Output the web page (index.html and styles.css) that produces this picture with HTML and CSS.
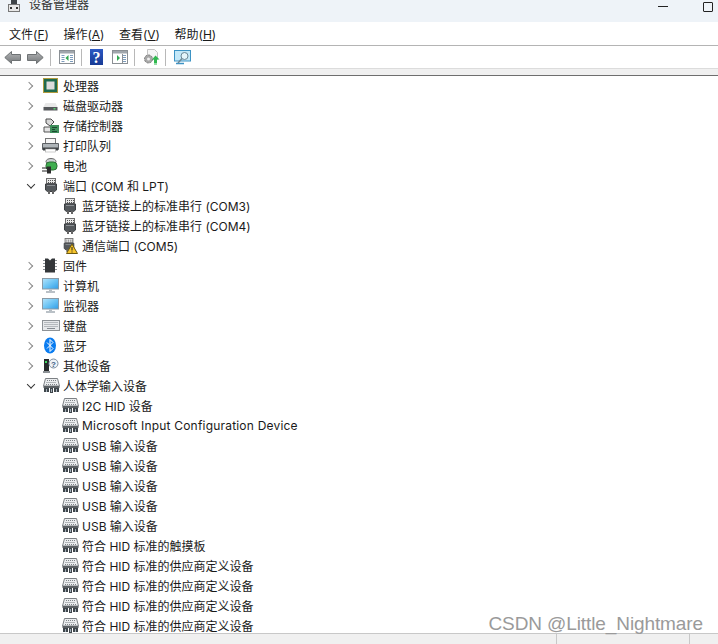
FILE: index.html
```html
<!DOCTYPE html>
<html lang="zh-CN">
<head>
    <meta charset="UTF-8">
    <title>设备管理器</title>
    <link rel="stylesheet" href="styles.css">
</head>
<body>
    <svg class="defs" width="0" height="0">
        <defs>
            <linearGradient id="arrow-grey" x1="0" y1="0" x2="0" y2="1">
                <stop offset="0" stop-color="#b4b6b8"/>
                <stop offset="1" stop-color="#747779"/>
            </linearGradient>
            <linearGradient id="help-blue" x1="0" y1="0" x2="0" y2="1">
                <stop offset="0" stop-color="#2b58c4"/>
                <stop offset="1" stop-color="#173a94"/>
            </linearGradient>
            <linearGradient id="screen-blue" x1="0" y1="0" x2="1" y2="1">
                <stop offset="0" stop-color="#b4e4fb"/>
                <stop offset="0.5" stop-color="#6cc4f4"/>
                <stop offset="1" stop-color="#2f9ce6"/>
            </linearGradient>
            <symbol id="port" viewBox="0 0 16 16">
                <rect x="3.5" y="0.5" width="9" height="5" fill="#e8e8e8" stroke="#6f6f6f"/>
                <path d="M5 2.500h1M7 2.500h1M9 2.500h1M11 2.500h1M5 4.500h1M7 4.500h1M9 4.500h1M11 4.500h1" stroke="#555"/>
                <path d="M2.5 6h11v6l-2 1.5h-7l-2-1.5z" fill="#54585c" stroke="#3c3f42"/>
                <path d="M4 7.500h8" stroke="#8c9094"/>
                <rect x="5" y="13" width="2" height="3" fill="#666"/>
                <rect x="9" y="13" width="2" height="3" fill="#666"/>
            </symbol>
            <symbol id="hid" viewBox="0 0 17 15">
                <path d="M2.5 0.500h12l2 7.500h-16z" fill="#eceef0" stroke="#7c8084"/>
                <path d="M4 2.500h9M3.500 4.500h10M3 6.500h11" stroke="#7d8286" stroke-dasharray="1 1"/>
                <rect x="0.5" y="8" width="16" height="2" fill="#5b6064"/>
                <path d="M1 10h5v4H1zM7 10h3v5H7zM11 10h5v4h-5z" fill="#3f464b"/>
                <path d="M3.500 11v3M8.500 11v3M13.500 11v3" stroke="#a4b0ba"/>
            </symbol>
            <symbol id="monitor" viewBox="0 0 17 15">
                <rect x="0.5" y="0.5" width="16" height="10.500" fill="url(#screen-blue)" stroke="#8a9aa6"/>
                <path d="M7 11.500h3v1.500H7z" fill="#b4bcc2"/>
                <path d="M4 14h9" stroke="#a3adb4" stroke-width="1.500"/>
            </symbol>
            <symbol id="pane" viewBox="0 0 16 14">
                <rect x="0.5" y="0.5" width="15" height="13" fill="#fff" stroke="#8a8f94"/>
                <rect x="1" y="1" width="14" height="2.500" fill="#a0a6ac"/>
            </symbol>
        </defs>
    </svg>

    <div class="window">
        <div class="titlebar">
            <svg class="title-icon" width="12" height="14" viewBox="0 0 12 14">
                <rect x="3" y="0" width="6" height="5" fill="#3e4347"/>
                <rect x="0.5" y="5.5" width="11" height="7" fill="#e8e8e8" stroke="#777"/>
                <path d="M2 9h2M8 9h2" stroke="#333" stroke-width="2"/>
            </svg>
            <span class="title-text">设备管理器</span>
            <span class="win-min"></span>
            <span class="win-max"></span>
        </div>

        <div class="menubar">
            <span>文件(<u>F</u>)</span>
            <span>操作(<u>A</u>)</span>
            <span>查看(<u>V</u>)</span>
            <span>帮助(<u>H</u>)</span>
        </div>

        <div class="toolbar">
            <svg class="tool" width="17" height="13" viewBox="0 0 17 13"><path d="M7.500 0.500L0.800 6.500l6.700 6V9.500h9v-6h-9z" fill="url(#arrow-grey)" stroke="#6e7274"/></svg>
            <svg class="tool" width="17" height="13" viewBox="0 0 17 13"><path d="M9.500 0.500l6.700 6-6.700 6V9.500h-9v-6h9z" fill="url(#arrow-grey)" stroke="#6e7274"/></svg>
            <i class="sep"></i>
            <svg class="tool" width="16" height="14" viewBox="0 0 16 14">
                <use href="#pane"/>
                <path d="M2.500 5.500h3M2.500 7.500h3M2.500 9.500h3M2.500 11.500h3M11 5.500h3M11 7.500h3M11 9.500h3M11 11.500h3" stroke="#7d9cbc"/>
                <path d="M9.500 5v6L6.500 8z" fill="#2fa84f"/>
            </svg>
            <i class="sep"></i>
            <svg class="tool tool-help" width="13" height="16" viewBox="0 0 13 16">
                <rect width="13" height="16" fill="url(#help-blue)"/>
                <text x="6.500" y="13.500" class="help-mark">?</text>
            </svg>
            <svg class="tool" width="16" height="14" viewBox="0 0 16 14">
                <use href="#pane"/>
                <path d="M10.500 4v9.500" stroke="#8a8f94"/>
                <path d="M11 5.500h3M11 7.500h3M11 9.500h3M11 11.500h3" stroke="#7d9cbc"/>
                <path d="M5 5v6l3-3z" fill="#2fa84f"/>
            </svg>
            <i class="sep"></i>
            <svg class="tool tool-gear" width="17" height="16" viewBox="0 0 17 16">
                <path d="M4.500 0.500h7l3 3v7h-10z" fill="#f6f6f6" stroke="#c4c4c4"/>
                <circle cx="5.500" cy="10" r="4" fill="#a8a8a8" stroke="#7c7c7c" stroke-dasharray="2 1"/>
                <circle cx="5.500" cy="10" r="1.500" fill="#eee"/>
                <path d="M12.500 6.500l4 4h-2.500V14h-3v-3.500H9z" fill="#2fb84f"/>
                <rect x="11" y="14.500" width="3" height="1" fill="#2fb84f"/>
            </svg>
            <i class="sep"></i>
            <svg class="tool" width="17" height="15" viewBox="0 0 17 15">
                <rect x="0.5" y="0.5" width="16" height="10.500" fill="#c4e8f8" stroke="#3d93c4"/>
                <path d="M2 13.500h8" stroke="#3d93c4" stroke-width="1.500"/>
                <circle cx="10.500" cy="6" r="3.500" fill="#e4f5fb" stroke="#6c8796"/>
                <path d="M8 8.500L4 13" stroke="#6c8796" stroke-width="1.500"/>
            </svg>
        </div>

        <div class="band"></div>

        <div class="tree">
            <div class="row">
                <i class="chev"></i>
                <svg class="ico" width="15" height="15" viewBox="0 0 15 15">
                    <rect x="0" y="0" width="15" height="15" fill="#b09a3c"/>
                    <rect x="1" y="1" width="13" height="13" fill="#1f6a4e"/>
                    <rect x="3.500" y="3.500" width="8" height="8" fill="#dcdcdc"/>
                </svg>
                <span>处理器</span>
            </div>
            <div class="row">
                <i class="chev"></i>
                <svg class="ico" width="15" height="16" viewBox="0 0 15 16">
                    <path d="M2.500 5h10l2 4h-14z" fill="#e8e8e8"/>
                    <rect x="0.5" y="9" width="14" height="3.500" fill="#56595c"/>
                    <rect x="10.500" y="10" width="2" height="1.500" fill="#5cd070"/>
                </svg>
                <span>磁盘驱动器</span>
            </div>
            <div class="row">
                <i class="chev"></i>
                <svg class="ico" width="16" height="16" viewBox="0 0 16 16">
                    <path d="M3 1h5l3 3-4 4-4-3z" fill="#d8d8d8" stroke="#4a4a4a"/>
                    <path d="M1 9h8v5H1z" fill="#e4e4e4" stroke="#555"/>
                    <rect x="7" y="7" width="9" height="8" fill="#3f8f5c"/>
                    <path d="M9 9.500h5M9 11.500h3M9 13.500h5" stroke="#1c4a30"/>
                </svg>
                <span>存储控制器</span>
            </div>
            <div class="row">
                <i class="chev"></i>
                <svg class="ico ico-left" width="17" height="15" viewBox="0 0 17 15">
                    <rect x="3.500" y="0.5" width="10" height="5" fill="#f6f6f6" stroke="#777"/>
                    <path d="M0.5 5.500h16v6h-16z" fill="#aeb4b8" stroke="#5c6064"/>
                    <rect x="1" y="9.500" width="15" height="3" fill="#3e4245"/>
                    <rect x="3.500" y="11" width="10" height="3" fill="#fff" stroke="#999" stroke-width="0.500"/>
                </svg>
                <span>打印队列</span>
            </div>
            <div class="row">
                <i class="chev"></i>
                <svg class="ico ico-left" width="16" height="16" viewBox="0 0 16 16">
                    <ellipse cx="9" cy="3.500" rx="5" ry="3" fill="#cdd2d4" stroke="#666"/>
                    <rect x="4" y="4" width="11" height="8" rx="3.500" fill="#3fae4f" stroke="#2a6b33"/>
                    <path d="M0 10h6M0 13h6" stroke="#222" stroke-width="1.200"/>
                    <path d="M5 8.500h4v7H5z" fill="#2c2c2c"/>
                </svg>
                <span>电池</span>
            </div>
            <div class="row">
                <i class="chev open"></i>
                <svg class="ico" width="16" height="16"><use href="#port"/></svg>
                <span>端口 (COM 和 LPT)</span>
            </div>
            <div class="row child">
                <svg class="ico" width="16" height="16"><use href="#port"/></svg>
                <span>蓝牙链接上的标准串行 (COM3)</span>
            </div>
            <div class="row child">
                <svg class="ico" width="16" height="16"><use href="#port"/></svg>
                <span>蓝牙链接上的标准串行 (COM4)</span>
            </div>
            <div class="row child">
                <svg class="ico" width="16" height="16" viewBox="0 0 16 16">
                    <use href="#port" width="14" height="14"/>
                    <path d="M10 6l5.500 9.500h-11z" fill="#f7c52c" stroke="#6e5a10"/>
                    <path d="M10 9v3.500M10 13.500v1" stroke="#222"/>
                </svg>
                <span>通信端口 (COM5)</span>
            </div>
            <div class="row">
                <i class="chev"></i>
                <svg class="ico" width="14" height="15" viewBox="0 0 14 15">
                    <path d="M2 0.500h3l2 2 2-2h3v14H2z" fill="#34373a"/>
                    <path d="M0 2.500h2M0 5.500h2M0 8.500h2M0 11.500h2M12 2.500h2M12 5.500h2M12 8.500h2M12 11.500h2" stroke="#8a8f94"/>
                </svg>
                <span>固件</span>
            </div>
            <div class="row">
                <i class="chev"></i>
                <svg class="ico ico-left" width="17" height="15"><use href="#monitor"/></svg>
                <span>计算机</span>
            </div>
            <div class="row">
                <i class="chev"></i>
                <svg class="ico ico-left" width="17" height="15"><use href="#monitor"/></svg>
                <span>监视器</span>
            </div>
            <div class="row">
                <i class="chev"></i>
                <svg class="ico ico-left" width="18" height="16" viewBox="0 0 18 16">
                    <rect x="0.5" y="2.500" width="17" height="10" fill="#e6e8ea" stroke="#8d9296"/>
                    <path d="M2.500 4.500h13M2.500 6.500h13M2.500 8.500h13" stroke="#858b91" stroke-dasharray="1 1"/>
                    <path d="M5 10.500h8" stroke="#858b91"/>
                </svg>
                <span>键盘</span>
            </div>
            <div class="row">
                <i class="chev"></i>
                <svg class="ico" width="14" height="17" viewBox="0 0 14 17">
                    <ellipse cx="7" cy="8.500" rx="6" ry="8" fill="#0a7cf0"/>
                    <path d="M4 5.500l6 6-3 3v-12l3 3-6 6" fill="none" stroke="#fff"/>
                </svg>
                <span>蓝牙</span>
            </div>
            <div class="row">
                <i class="chev"></i>
                <svg class="ico" width="16" height="16" viewBox="0 0 16 16">
                    <rect x="1" y="1" width="5" height="12" fill="#26292b"/>
                    <rect x="2" y="3" width="2" height="2" fill="#3fd860"/>
                    <rect x="0" y="13" width="7" height="2" fill="#8d9296"/>
                    <circle cx="10.500" cy="5.500" r="4.500" fill="#eef2f6" stroke="#7d8ea0"/>
                    <text x="10.500" y="8.500" class="other-mark">?</text>
                </svg>
                <span>其他设备</span>
            </div>
            <div class="row">
                <i class="chev open"></i>
                <svg class="ico" width="17" height="15"><use href="#hid"/></svg>
                <span>人体学输入设备</span>
            </div>
            <div class="row child"><svg class="ico" width="17" height="15"><use href="#hid"/></svg><span>I2C HID 设备</span></div>
            <div class="row child"><svg class="ico" width="17" height="15"><use href="#hid"/></svg><span class="wide-text">Microsoft Input Configuration Device</span></div>
            <div class="row child"><svg class="ico" width="17" height="15"><use href="#hid"/></svg><span>USB 输入设备</span></div>
            <div class="row child"><svg class="ico" width="17" height="15"><use href="#hid"/></svg><span>USB 输入设备</span></div>
            <div class="row child"><svg class="ico" width="17" height="15"><use href="#hid"/></svg><span>USB 输入设备</span></div>
            <div class="row child"><svg class="ico" width="17" height="15"><use href="#hid"/></svg><span>USB 输入设备</span></div>
            <div class="row child"><svg class="ico" width="17" height="15"><use href="#hid"/></svg><span>USB 输入设备</span></div>
            <div class="row child"><svg class="ico" width="17" height="15"><use href="#hid"/></svg><span>符合 HID 标准的触摸板</span></div>
            <div class="row child"><svg class="ico" width="17" height="15"><use href="#hid"/></svg><span>符合 HID 标准的供应商定义设备</span></div>
            <div class="row child"><svg class="ico" width="17" height="15"><use href="#hid"/></svg><span>符合 HID 标准的供应商定义设备</span></div>
            <div class="row child"><svg class="ico" width="17" height="15"><use href="#hid"/></svg><span>符合 HID 标准的供应商定义设备</span></div>
            <div class="row child"><svg class="ico" width="17" height="15"><use href="#hid"/></svg><span>符合 HID 标准的供应商定义设备</span></div>
        </div>

        <div class="statusbar">
            <i class="status-main"></i>
            <i class="status-mid"></i>
            <i></i>
        </div>

        <div class="watermark">CSDN @Little_Nightmare</div>
    </div>
</body>
</html>
```

FILE: styles.css
```css
*{
    margin: 0;
    padding: 0;
    box-sizing: border-box;
}
body
{
    background-color: #fff;
    font-family: "Inter", "Noto Sans CJK SC", sans-serif;
    font-size: 12px;
    color: #1a1a1a;
}
.defs
{
    position: absolute;
}
.window
{
    position: relative;
    width: 718px;
    height: 644px;
    display: flex;
    flex-direction: column;
    overflow: hidden;
}
.titlebar
{
    flex: none;
    height: 22px;
    background-color: #eef3f8;
    display: flex;
    align-items: flex-end;
    padding: 0 5px 10px 8px;
    overflow: hidden;
}
.title-icon
{
    flex: none;
    margin-bottom: -1px;
}
.title-text
{
    flex: 1;
    margin-left: 9px;
    line-height: 14px;
    color: #333;
}
.win-min
{
    width: 10px;
    height: 1px;
    background-color: #222;
    margin-bottom: 5px;
    margin-right: 35px;
}
.win-max
{
    width: 10px;
    height: 10px;
    border: 1px solid #222;
    border-radius: 1px;
}
.menubar
{
    flex: none;
    height: 24px;
    background-color: #fff;
    border-bottom: 1px solid #b4b4b4;
    display: flex;
    align-items: center;
    gap: 14.5px;
    padding-left: 9px;
}
.toolbar
{
    flex: none;
    height: 22px;
    background-color: #fff;
    display: flex;
    align-items: center;
    padding-left: 4px;
}
.tool
{
    flex: none;
    margin-right: 6px;
}
.tool-help
{
    margin-right: 9px;
}
.tool-gear
{
    margin-right: 5px;
}
.help-mark
{
    font-family: "Liberation Serif", serif;
    font-size: 16px;
    font-weight: bold;
    fill: #fff;
    text-anchor: middle;
}
.other-mark
{
    font-family: "Liberation Sans", sans-serif;
    font-size: 8px;
    font-weight: bold;
    fill: #3a5a80;
    text-anchor: middle;
}
.sep
{
    flex: none;
    width: 1px;
    height: 17px;
    background-color: #b8b8b8;
    margin-right: 8px;
}
.band
{
    flex: none;
    height: 8px;
    background-color: #f0f0f0;
    border-top: 1px solid #dcdcdc;
    border-bottom: 1px solid #6e6e6e;
}
.tree
{
    flex: 1;
    min-height: 0;
    overflow: hidden;
}
.row
{
    height: 20px;
    display: grid;
    grid-template-columns: 16px 20px auto;
    align-items: center;
    padding-left: 27px;
    padding-bottom: 1px;
    white-space: nowrap;
}
.row.child
{
    grid-template-columns: 20px auto;
    padding-left: 62px;
}
.wide-text
{
    letter-spacing: 0.2px;
}
.chev
{
    justify-self: start;
    width: 6px;
    height: 6px;
    margin-left: -1px;
    border-top: 1.5px solid #8a8a8a;
    border-right: 1.5px solid #8a8a8a;
    transform: rotate(45deg);
}
.chev.open
{
    border-color: #333;
    transform: translate(2px, -1.5px) rotate(135deg);
}
.ico-left
{
    margin-left: -1px;
}
.statusbar
{
    flex: none;
    height: 11px;
    background-color: #f0f0f0;
    border-top: 1px solid #c8c8c8;
    display: flex;
}
.status-main
{
    width: 557px;
    border-right: 1px solid #c8c8c8;
}
.status-mid
{
    width: 133px;
    border-right: 1px solid #c8c8c8;
}
.watermark
{
    position: absolute;
    right: 15px;
    bottom: 9px;
    font-family: "Liberation Sans", sans-serif;
    font-size: 19px;
    letter-spacing: -0.1px;
    color: #9a9a9a;
}
```
